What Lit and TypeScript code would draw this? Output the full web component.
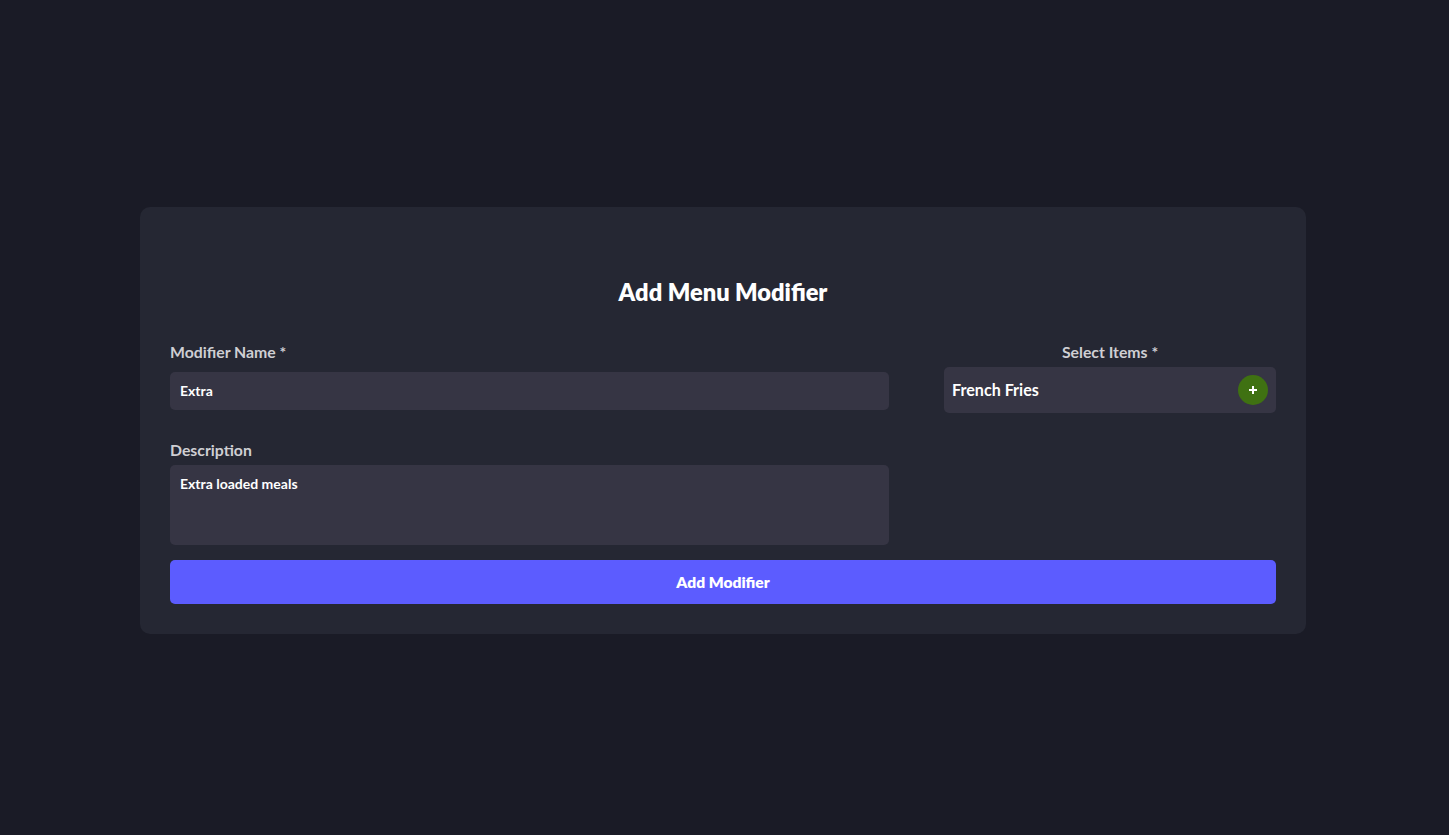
import { LitElement, html, css } from "lit";
import { customElement } from "lit/decorators.js";

@customElement("app-root")
export class AppRoot extends LitElement {
  static styles = css`
    :host {
      display: block;
      min-height: 835px;
      box-sizing: border-box;
      padding: 207px 143px 0 140px;
      background: #1a1b26;
      font-family: "Lato", "Noto Sans", sans-serif;
      color: #fff;
    }
    .card {
      background: #252733;
      border-radius: 10px;
      padding: 70px 30px 30px;
      height: 427px;
      box-sizing: border-box;
    }
    h1 {
      margin: 0;
      height: 30px;
      line-height: 30px;
      font-size: 23.6px;
      font-weight: 800;
      text-align: center;
    }
    .grid {
      display: grid;
      grid-template-columns: 719px 332px;
      column-gap: 55px;
      margin-top: 30px;
    }
    label {
      display: block;
      font-size: 15.8px;
      line-height: 20px;
      font-weight: 700;
      color: #cfcfd3;
    }
    .name-label { margin-top: 5px; }
    .center { text-align: center; margin-top: 5px; }
    input, textarea {
      display: block;
      box-sizing: border-box;
      width: 100%;
      border: 0;
      outline: 0;
      margin: 0;
      background: #363544;
      border-radius: 5px;
      color: #fff;
      font-family: inherit;
      font-size: 14px;
      font-weight: 700;
      padding: 10px;
      resize: none;
    }
    input { height: 38px; margin-top: 10px; padding: 8px 10px 10px; }
    .desc-label { margin-top: 30px; }
    textarea { height: 80px; margin-top: 5px; line-height: 18px; }
    .select {
      margin-top: 5px;
      height: 46px;
      box-sizing: border-box;
      background: #363544;
      border-radius: 5px;
      display: flex;
      align-items: center;
      justify-content: space-between;
      padding: 0 8px;
      font-size: 16.1px;
      font-weight: 700;
    }
    .select span { padding-bottom: 2px; }
    .select button {
      width: 30px;
      height: 30px;
      border: 0;
      padding: 0;
      border-radius: 50%;
      background: #3f7112;
      display: flex;
      align-items: center;
      justify-content: center;
    }
    .submit {
      display: block;
      width: 100%;
      height: 44px;
      margin-top: 15px;
      border: 0;
      border-radius: 5px;
      background: #5c5cff;
      color: #fff;
      font-family: inherit;
      font-size: 15.6px;
      font-weight: 800;
      padding: 0;
    }
    svg { display: block; }
  `;

  render() {
    return html`
      <div class="card">
        <h1>Add Menu Modifier</h1>
        <div class="grid">
          <div>
            <label class="name-label">Modifier Name *</label>
            <input value="Extra" />
            <label class="desc-label">Description</label>
            <textarea>Extra loaded meals</textarea>
          </div>
          <div>
            <label class="center">Select Items *</label>
            <div class="select">
              <span>French Fries</span>
              <button aria-label="Add">
                <svg width="10" height="10" viewBox="0 0 10 10"><path d="M5 1v8M1 5h8" stroke="#fff" stroke-width="2" fill="none" /></svg>
              </button>
            </div>
          </div>
        </div>
        <button class="submit">Add Modifier</button>
      </div>
    `;
  }
}
